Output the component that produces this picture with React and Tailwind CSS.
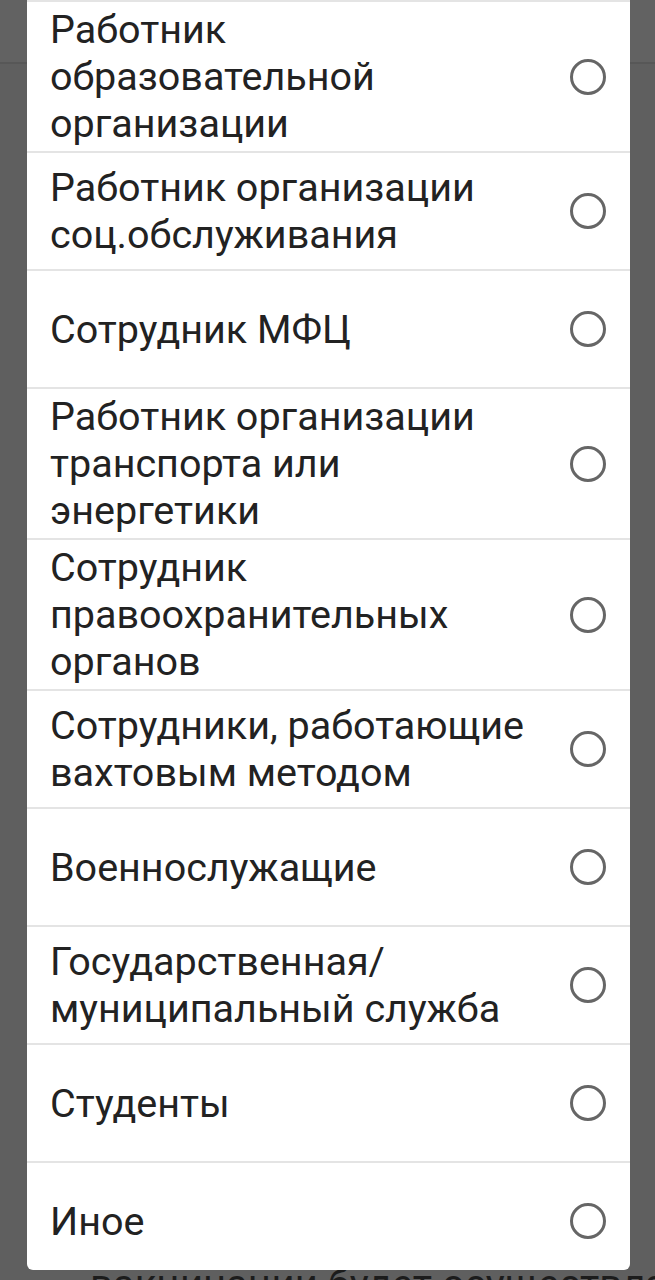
import React from "react";

const items = [
  "Работник образовательной организации",
  "Работник организации соц.обслуживания",
  "Сотрудник МФЦ",
  "Работник организации транспорта или энергетики",
  "Сотрудник правоохранительных органов",
  "Сотрудники, работающие вахтовым методом",
  "Военнослужащие",
  "Государственная/ муниципальный служба",
  "Студенты",
  "Иное",
];

function Radio() {
  return (
    <div className="w-[36px] h-[36px] shrink-0 rounded-full border-[3.5px] border-[#666666] ml-[20px]" />
  );
}

export default function App() {
  return (
    <div
      className="relative w-[655px] h-[1280px] overflow-hidden bg-[#5f5f5f]"
      style={{ fontFamily: "Roboto, 'Noto Sans', sans-serif" }}
    >
      <div className="h-[64px] bg-[#626262] border-b-2 border-[#575757]" />
      <div className="pt-[1197px] pl-[90px] text-[40px] leading-[47px] text-[#1c1c1c] whitespace-nowrap">
        вакцинации будет осуществляться по
      </div>

      <div className="absolute left-[27px] top-0 w-[603px] h-[1270px] bg-white rounded-b-[6px] overflow-hidden">
        {items.map((t) => (
          <div
            key={t}
            className="flex items-center min-h-[118px] py-[4px] pl-[23px] pr-[24px] border-t-2 border-[#e4e4e4]"
          >
            <div className="flex-1 min-w-0 text-[39.5px] leading-[47px] text-[#222222]">{t}</div>
            <Radio />
          </div>
        ))}
      </div>
    </div>
  );
}
